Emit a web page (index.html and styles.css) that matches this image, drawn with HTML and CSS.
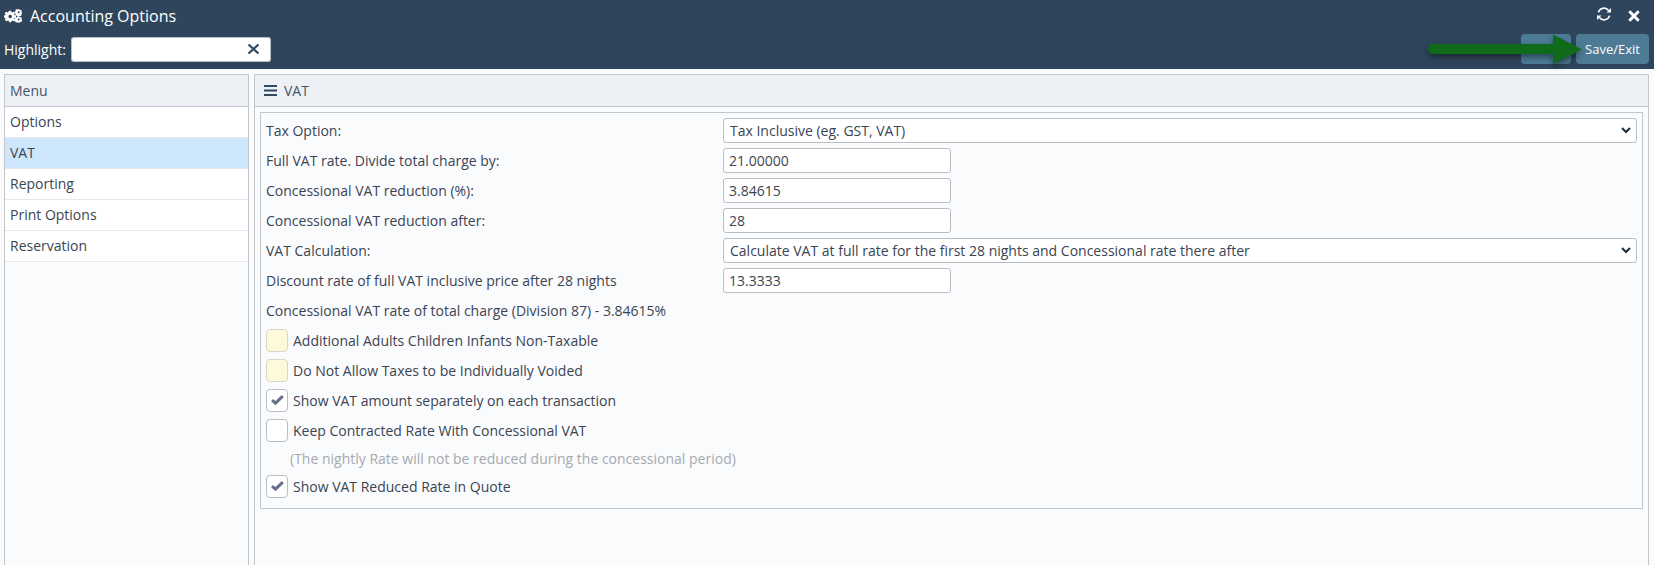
FILE: index.html
```html
<!DOCTYPE html>
<html lang="en">
<head>
  <meta charset="UTF-8">
  <title>Accounting Options</title>
  <link rel="stylesheet" href="styles.css">
</head>
<body>
  <div class="header">
    <div class="title-row">
      <div class="title">
        <svg class="cogs" viewBox="0 0 18 14" width="18" height="14">
          <path fill="#fff" fill-rule="evenodd" d="M5.200 1.700h2l.3 1.400.9.4 1.200-.8 1.400 1.400-.8 1.200.4.9 1.400.3v2l-1.400.3-.4.9.8 1.200-1.400 1.400-1.200-.8-.9.4-.3 1.400h-2l-.3-1.400-.9-.4-1.200.8L.7 10.900l.8-1.200-.4-.9L-.3 8.500V6.500l1.400-.3.4-.9-.8-1.200L2.100 2.700l1.200.8.9-.4zM6.200 5.700a1.800 1.800 0 1 0 0 3.600 1.800 1.800 0 0 0 0-3.600z"/>
          <path fill="#fff" fill-rule="evenodd" d="M14.100 0h1.300l.2.9.7.3.8-.4.8 1-.6.7.2.7.9.3v1.300l-.9.2-.3.7.4.8-1 .8-.7-.6-.7.2-.3.9h-1.300l-.2-.9-.7-.3-.8.4-.8-1 .6-.7-.2-.7-.9-.3V2.500l.9-.2.3-.7-.4-.8 1-.8.7.6.7-.2zM14.700 2.300a1 1 0 1 0 0 2 1 1 0 0 0 0-2z"/>
          <path fill="#fff" fill-rule="evenodd" d="M14.100 7.300h1.300l.2.9.7.3.8-.4.8 1-.6.7.2.7.9.3v1.300l-.9.2-.3.7-.8-.1-.8.8-.7-.3h-1.300l-.7.3-.8-.8-.8.1-.3-.7-.9-.2V10.800l.9-.3.2-.7-.6-.7.8-1 .8.4.7-.3zM14.700 9.600a1 1 0 1 0 0 2 1 1 0 0 0 0-2z"/>
        </svg>
        <span>Accounting Options</span>
      </div>
      <div class="window-icons">
        <svg class="sync" viewBox="0 0 16 14" width="16" height="14">
          <path fill="none" stroke="#fff" stroke-width="1.600" d="M2.400 5.400A5.800 5.800 0 0 1 12.600 3.500M13.600 8.600A5.800 5.800 0 0 1 3.400 10.500"/>
          <path fill="#fff" d="M15 1v4.500h-4.500zM1 13V8.500h4.500z"/>
        </svg>
        <svg viewBox="0 0 12 12" width="12" height="12">
          <path stroke="#fff" stroke-width="3" d="M1.300 1.300l9.400 9.400M10.700 1.300l-9.400 9.400"/>
        </svg>
      </div>
    </div>
    <div class="tool-row">
      <div class="highlight">
        <label>Highlight:</label>
        <input class="highlight-input" type="text">
        <button class="clear-button">
          <svg viewBox="0 0 13 10" width="13" height="10">
            <path stroke="#2f4b63" stroke-width="2.200" d="M1.500 .5l10 9M11.500 .5l-10 9"/>
          </svg>
        </button>
      </div>
      <div class="actions">
        <button class="action-button blank"></button>
        <button class="action-button save">Save/Exit</button>
        <svg class="arrow" viewBox="0 0 156 31" width="156" height="31">
          <path fill="#0f6b1a" d="M5 10h120V0.500L154 15.500 125 30V20H5a5 5 0 0 1 0-10z"/>
        </svg>
      </div>
    </div>
  </div>

  <div class="content">
    <div class="menu">
      <div class="panel-head">Menu</div>
      <div class="menu-item">Options</div>
      <div class="menu-item selected">VAT</div>
      <div class="menu-item">Reporting</div>
      <div class="menu-item">Print Options</div>
      <div class="menu-item">Reservation</div>
    </div>

    <div class="main">
      <div class="panel-head">
        <svg class="bars" viewBox="0 0 13 11" width="13" height="11">
          <path fill="#2f4b63" d="M0 0h13v2H0zM0 4.500h13v2H0zM0 9h13v2H0z"/>
        </svg>
        VAT
      </div>
      <div class="form">
        <div class="form-row">
          <label>Tax Option:</label>
          <div class="select">Tax Inclusive (eg. GST, VAT)<svg viewBox="0 0 10 7" width="10" height="7"><path fill="none" stroke="#1f2d3d" stroke-width="2" d="M1 1l4 4 4-4"/></svg></div>
        </div>
        <div class="form-row">
          <label>Full VAT rate. Divide total charge by:</label>
          <input class="text-input" type="text" value="21.00000">
        </div>
        <div class="form-row">
          <label>Concessional VAT reduction (%):</label>
          <input class="text-input" type="text" value="3.84615">
        </div>
        <div class="form-row">
          <label>Concessional VAT reduction after:</label>
          <input class="text-input" type="text" value="28">
        </div>
        <div class="form-row">
          <label>VAT Calculation:</label>
          <div class="select">Calculate VAT at full rate for the first 28 nights and Concessional rate there after<svg viewBox="0 0 10 7" width="10" height="7"><path fill="none" stroke="#1f2d3d" stroke-width="2" d="M1 1l4 4 4-4"/></svg></div>
        </div>
        <div class="form-row">
          <label>Discount rate of full VAT inclusive price after 28 nights</label>
          <input class="text-input" type="text" value="13.3333">
        </div>
        <div class="form-row">
          <label class="wide">Concessional VAT rate of total charge (Division 87) - 3.84615%</label>
        </div>
        <div class="check-row">
          <span class="check yellow"></span>
          <label>Additional Adults Children Infants Non-Taxable</label>
        </div>
        <div class="check-row">
          <span class="check yellow"></span>
          <label>Do Not Allow Taxes to be Individually Voided</label>
        </div>
        <div class="check-row">
          <span class="check"><svg viewBox="0 0 13 10" width="13" height="10"><path fill="none" stroke="#66708a" stroke-width="3" d="M1 5.200l3.500 3L11.800 1.200"/></svg></span>
          <label>Show VAT amount separately on each transaction</label>
        </div>
        <div class="check-row">
          <span class="check"></span>
          <label>Keep Contracted Rate With Concessional VAT</label>
        </div>
        <div class="note">(The nightly Rate will not be reduced during the concessional period)</div>
        <div class="check-row">
          <span class="check"><svg viewBox="0 0 13 10" width="13" height="10"><path fill="none" stroke="#66708a" stroke-width="3" d="M1 5.200l3.500 3L11.800 1.200"/></svg></span>
          <label>Show VAT Reduced Rate in Quote</label>
        </div>
      </div>
    </div>
  </div>
</body>
</html>
```

FILE: styles.css
```css
* {
  margin: 0;
  padding: 0;
  box-sizing: border-box;
}
html, body {
  height: 100%;
  overflow: hidden;
}
body {
  display: flex;
  flex-direction: column;
  font-family: "Open Sans", sans-serif;
  font-size: 14px;
  color: #3a4452;
  background-color: #fafbfd;
}

.header {
  background-color: #2f455c;
  color: #fff;
  height: 69px;
  flex: none;
  padding: 0 5px 0 4px;
}
.title-row {
  display: flex;
  align-items: center;
  justify-content: space-between;
  height: 32px;
}
.title {
  display: flex;
  align-items: center;
  gap: 8px;
  font-size: 16px;
}
.window-icons {
  display: flex;
  align-items: center;
  gap: 16px;
  padding-right: 9px;
}
.sync {
  margin-top: -4px;
}
.tool-row {
  display: flex;
  align-items: center;
  justify-content: space-between;
  height: 34px;
}
.highlight {
  display: flex;
  align-items: center;
  font-size: 14px;
}
.highlight label {
  margin-right: 5px;
}
.highlight-input {
  width: 170px;
  height: 25px;
  border: 1px solid #b9bec4;
  border-right: none;
  border-radius: 3px 0 0 3px;
  background-color: #fff;
}
.clear-button {
  display: flex;
  align-items: center;
  justify-content: center;
  width: 30px;
  height: 25px;
  padding-right: 3px;
  border: 1px solid #b9bec4;
  border-left: none;
  border-radius: 0 3px 3px 0;
  background-color: #fff;
}
.actions {
  display: flex;
  gap: 5px;
  position: relative;
}
.action-button {
  height: 30px;
  border: none;
  border-radius: 4px;
  background-color: #4d7b96;
  color: #fff;
  font-family: "Open Sans", sans-serif;
  font-size: 13px;
}
.action-button.blank {
  width: 50px;
}
.action-button.save {
  width: 73px;
}
.arrow {
  position: absolute;
  left: -93px;
  top: 0;
  filter: drop-shadow(0 3px 3px rgba(0, 0, 0, 0.45));
}

.content {
  flex: 1;
  display: flex;
  gap: 5px;
  padding: 5px 5px 0 4px;
  min-height: 0;
}
.menu {
  width: 245px;
  flex: none;
  border: 1px solid #c3c6ca;
  border-bottom: none;
}
.main {
  flex: 1;
  border: 1px solid #c3c6ca;
  border-bottom: none;
}
.panel-head {
  display: flex;
  align-items: center;
  height: 32px;
  padding-left: 5px;
  color: #45566a;
  background-color: #edf0f5;
  border-bottom: 1px solid #c3c6ca;
}
.main .panel-head {
  padding-left: 9px;
}
.bars {
  margin-right: 7px;
}
.menu-item {
  height: 31px;
  line-height: 30px;
  padding-left: 5px;
  background-color: #fff;
  border-bottom: 1px solid #e6e8ec;
}
.menu-item.selected {
  background-color: #cde6fb;
}

.form {
  margin: 5px 5px 0 5px;
  padding: 2px 5px 7px 5px;
  border: 1px solid #c3c6ca;
}
.form-row {
  display: flex;
  align-items: center;
  height: 30px;
}
.form-row label {
  width: 457px;
  flex: none;
}
.form-row label.wide {
  width: auto;
}
.select {
  flex: 1;
  display: flex;
  align-items: center;
  justify-content: space-between;
  height: 25px;
  padding: 0 5px 0 6px;
  border: 1px solid #b9bec4;
  border-radius: 3px;
  background-color: #fff;
}
.text-input {
  width: 228px;
  height: 25px;
  padding: 0 5px;
  border: 1px solid #b9bec4;
  border-radius: 3px;
  background-color: #fff;
  color: #3a4452;
  font-family: "Open Sans", sans-serif;
  font-size: 14px;
}
.check-row {
  display: flex;
  align-items: center;
  gap: 5px;
  height: 30px;
}
.check {
  display: flex;
  align-items: center;
  justify-content: center;
  width: 22px;
  height: 23px;
  border: 1px solid #b9bec4;
  border-radius: 4px;
  background-color: #fff;
}
.check.yellow {
  background-color: #fff9dc;
  border-color: #d8d6c8;
}
.note {
  height: 26px;
  line-height: 28px;
  padding-left: 24px;
  color: #a6a9ae;
}
```
